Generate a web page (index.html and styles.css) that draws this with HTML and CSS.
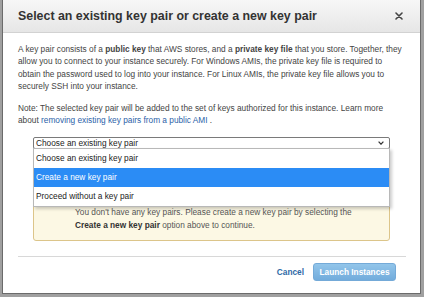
FILE: index.html
```html
<!DOCTYPE html>
<html lang="en">
<head>
  <meta charset="UTF-8" />
  <title>Select key pair</title>
  <link rel="stylesheet" href="styles.css">
</head>
<body>

  <div class="modal">
    <div class="modal-header">
      <h3>Select an existing key pair or create a new key pair</h3>
      <button class="close-btn" aria-label="Close">
        <svg width="8" height="8" viewBox="0 0 8 8"><path d="M1 1L7 7M7 1L1 7" stroke="#444" stroke-width="1.6" stroke-linecap="round"/></svg>
      </button>
    </div>

    <div class="modal-body">
      <p>A key pair consists of a <b>public key</b> that AWS stores, and a <b>private key file</b> that you store. Together, they allow you to connect to your instance securely. For Windows AMIs, the private key file is required to obtain the password used to log into your instance. For Linux AMIs, the private key file allows you to securely SSH into your instance.</p>
      <p class="note">Note: The selected key pair will be added to the set of keys authorized for this instance. Learn more about <a href="#">removing existing key pairs from a public AMI</a> .</p>

      <div class="key-select">
        <div class="select-box">
          <span>Choose an existing key pair</span>
          <svg width="6" height="4" viewBox="0 0 6 4"><path d="M0.6 0.6L3 3.2L5.4 0.6" fill="none" stroke="#333" stroke-width="1.2"/></svg>
        </div>
        <ul class="options">
          <li>Choose an existing key pair</li>
          <li class="active">Create a new key pair</li>
          <li>Proceed without a key pair</li>
        </ul>
      </div>

      <div class="warning">
        You don't have any key pairs. Please create a new key pair by selecting the <b>Create a new key pair</b> option above to continue.
      </div>
    </div>

    <div class="modal-footer">
      <a href="#" class="cancel">Cancel</a>
      <button class="launch" disabled>Launch Instances</button>
    </div>
  </div>

</body>
</html>
```

FILE: styles.css
```css
body {
  margin: 0;
  background-color: #a0a0a0;
  font-family: "Liberation Sans", Arial, sans-serif;
  color: #444;
}

.modal {
  margin-left: 2px;
  width: 419px;
  height: 294px;
  box-sizing: border-box;
  background-color: #fff;
  border: 1px solid #6b6b6b;
  border-top: none;
  display: flex;
  flex-direction: column;
}

.modal-header {
  height: 32px;
  display: flex;
  align-items: center;
  justify-content: space-between;
  padding: 0 17px 0 15px;
  background: linear-gradient(#f7f7f7, #e6e6e6);
  border-bottom: 1px solid #d2d2d2;
}

.modal-header h3 {
  margin: 0;
  font-size: 12.4px;
  font-weight: bold;
  color: #333;
}

.close-btn {
  background: none;
  border: none;
  padding: 0;
  width: 8px;
  height: 8px;
  display: flex;
}

.modal-body {
  padding: 10px 14px 0 15px;
  font-size: 8.3px;
  line-height: 12.4px;
}

.modal-body p {
  margin: 0;
}

.modal-body p.note {
  margin-top: 9px;
}

.modal-body a {
  color: #2b62a8;
  text-decoration: none;
}

.key-select {
  position: relative;
  margin: 11px 16px 0 15px;
}

.select-box {
  height: 12px;
  box-sizing: border-box;
  border: 1px solid #7a7a7a;
  border-radius: 2px;
  padding: 0 5px 0 2px;
  display: flex;
  align-items: center;
  justify-content: space-between;
  color: #222;
  line-height: 10px;
}

.options {
  position: absolute;
  top: 11px;
  left: 0;
  right: 0;
  margin: 0;
  padding: 0;
  list-style: none;
  background-color: #fff;
  border: 1px solid #b8b8b8;
  box-shadow: 2px 2px 3px rgba(0, 0, 0, 0.2);
  z-index: 10;
}

.options li {
  height: 19px;
  line-height: 19px;
  padding-left: 2px;
  color: #222;
}

.options li.active {
  background-color: #2b8cf5;
  color: #fff;
}

.warning {
  margin: 10px 16px 0 15px;
  padding: 46px 20px 9px 41px;
  background-color: #fcf8e4;
  border: 1px solid #dcc58a;
  border-radius: 3px;
  color: #555;
}

.warning b {
  color: #333;
}

.modal-footer {
  margin: 15px 14px 0 15px;
  padding: 6px 10px 0 0;
  border-top: 1px solid #d8d8d8;
  display: flex;
  justify-content: flex-end;
  align-items: center;
}

.cancel {
  font-size: 8.3px;
  font-weight: bold;
  color: #2d69a6;
  text-decoration: none;
  margin-right: 9px;
}

.launch {
  height: 18px;
  width: 83px;
  padding: 0;
  font-family: "Liberation Sans", Arial, sans-serif;
  font-size: 8.3px;
  font-weight: bold;
  color: #fff;
  background: linear-gradient(#92c5ea, #72acdc);
  border: 1px solid #74aad8;
  border-radius: 3px;
}
```
